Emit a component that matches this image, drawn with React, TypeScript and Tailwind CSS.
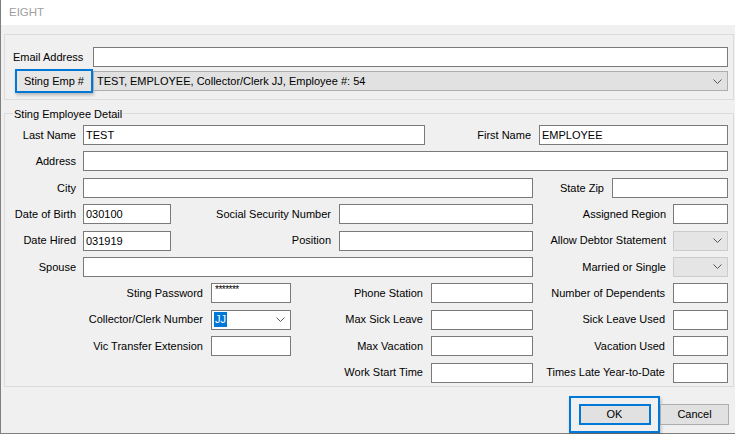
const font = { fontFamily: '"Liberation Sans", Arial, sans-serif' };

function Chevron() {
  return (
    <svg width="9" height="5" viewBox="0 0 9 5" className="shrink-0">
      <polyline points="0.5,0.5 4.5,4.5 8.5,0.5" fill="none" stroke="#555" strokeWidth="1" />
    </svg>
  );
}

function Lbl({ w, children }: { w: string; children: React.ReactNode }) {
  return <div className={`${w} shrink-0 text-right whitespace-nowrap`}>{children}</div>;
}

function Box({ w, ml, value }: { w: string; ml: string; value?: string }) {
  return (
    <div className={`${w} ${ml} h-[20px] shrink-0 border border-[#7a7a7a] bg-white pl-[2px] leading-[18px]`}>
      {value}
    </div>
  );
}

function Drop({ w, ml }: { w: string; ml: string }) {
  return (
    <div className={`${w} ${ml} h-[20px] shrink-0 border border-[#cccccc] bg-[#e5e5e5] flex items-center justify-end pr-[5px]`}>
      <Chevron />
    </div>
  );
}

export default function App() {
  return (
    <div className="w-[735px] h-[434px] bg-[#f0f0f0] border-l border-b border-[#7f7f7f] text-[11px] text-black flex flex-col" style={font}>
      <div className="h-[25px] bg-white flex items-center pl-[8px] text-[11.5px] text-[#a0a0a0] shrink-0">EIGHT</div>

      {/* top group */}
      <div className="mt-[9px] ml-[3px] w-[730px] h-[66px] border border-[#dcdcdc] flex flex-col">
        <div className="flex items-center mt-[12px]">
          <div className="w-[88px] pl-[8px] whitespace-nowrap">Email Address</div>
          <Box w="w-[635px]" ml="ml-0" />
        </div>
        <div className="flex items-center mt-[2px]">
          <div className="ml-[10px] w-[78px] h-[24px] border-2 border-[#0078d7] shadow-[1px_2px_3px_rgba(0,0,0,0.25)] flex items-center justify-center bg-[#e6e6e6]">
            Sting Emp #
          </div>
          <div className="w-[635px] h-[20px] border border-[#adadad] bg-[#e1e1e1] flex items-center pl-[3px] pr-[5px]">
            <span className="flex-1">TEST, EMPLOYEE, Collector/Clerk JJ, Employee #: 54</span>
            <Chevron />
          </div>
        </div>
      </div>

      {/* detail group */}
      <div className="relative mt-[13px] ml-[3px] w-[730px] h-[274px] border border-[#dcdcdc] flex flex-col gap-[6.4px] pt-[11px]">
        <div className="absolute left-[8px] top-[-8px] bg-[#f0f0f0] px-[1px]">Sting Employee Detail</div>

        <div className="flex items-center">
          <Lbl w="w-[71px]">Last Name</Lbl>
          <Box w="w-[342px]" ml="ml-[7px]" value="TEST" />
          <Lbl w="w-[106px]">First Name</Lbl>
          <Box w="w-[189px]" ml="ml-[8px]" value="EMPLOYEE" />
        </div>
        <div className="flex items-center">
          <Lbl w="w-[71px]">Address</Lbl>
          <Box w="w-[645px]" ml="ml-[7px]" />
        </div>
        <div className="flex items-center">
          <Lbl w="w-[71px]">City</Lbl>
          <Box w="w-[450px]" ml="ml-[7px]" />
          <Lbl w="w-[71px]">State Zip</Lbl>
          <Box w="w-[116px]" ml="ml-[8px]" />
        </div>
        <div className="flex items-center">
          <Lbl w="w-[71px]">Date of Birth</Lbl>
          <Box w="w-[88px]" ml="ml-[7px]" value="030100" />
          <Lbl w="w-[160px]">Social Security Number</Lbl>
          <Box w="w-[194px]" ml="ml-[8px]" />
          <Lbl w="w-[133px]">Assigned Region</Lbl>
          <Box w="w-[55px]" ml="ml-[7px]" />
        </div>
        <div className="flex items-center">
          <Lbl w="w-[71px]">Date Hired</Lbl>
          <Box w="w-[88px]" ml="ml-[7px]" value="031919" />
          <Lbl w="w-[160px]">Position</Lbl>
          <Box w="w-[194px]" ml="ml-[8px]" />
          <Lbl w="w-[133px]">Allow Debtor Statement</Lbl>
          <Drop w="w-[55px]" ml="ml-[7px]" />
        </div>
        <div className="flex items-center">
          <Lbl w="w-[71px]">Spouse</Lbl>
          <Box w="w-[450px]" ml="ml-[7px]" />
          <Lbl w="w-[133px]">Married or Single</Lbl>
          <Drop w="w-[55px]" ml="ml-[7px]" />
        </div>
        <div className="flex items-center">
          <Lbl w="w-[198px]">Sting Password</Lbl>
          <div className="w-[80px] ml-[8px] h-[20px] shrink-0 border border-[#7a7a7a] bg-white pl-[3px] leading-[12px] text-[10px] tracking-[-0.5px]">*******</div>
          <Lbl w="w-[132px]">Phone Station</Lbl>
          <Box w="w-[102px]" ml="ml-[8px]" />
          <Lbl w="w-[132px]">Number of Dependents</Lbl>
          <Box w="w-[55px]" ml="ml-[8px]" />
        </div>
        <div className="flex items-center">
          <Lbl w="w-[198px]">Collector/Clerk Number</Lbl>
          <div className="w-[80px] ml-[8px] h-[20px] shrink-0 border border-[#7a7a7a] bg-white flex items-center pl-[2px] pr-[5px]">
            <span className="bg-[#0078d7] text-white px-[1px] leading-[15px]">JJ</span>
            <span className="flex-1" />
            <Chevron />
          </div>
          <Lbl w="w-[132px]">Max Sick Leave</Lbl>
          <Box w="w-[102px]" ml="ml-[8px]" />
          <Lbl w="w-[132px]">Sick Leave Used</Lbl>
          <Box w="w-[55px]" ml="ml-[8px]" />
        </div>
        <div className="flex items-center">
          <Lbl w="w-[198px]">Vic Transfer Extension</Lbl>
          <Box w="w-[80px]" ml="ml-[8px]" />
          <Lbl w="w-[132px]">Max Vacation</Lbl>
          <Box w="w-[102px]" ml="ml-[8px]" />
          <Lbl w="w-[132px]">Vacation Used</Lbl>
          <Box w="w-[55px]" ml="ml-[8px]" />
        </div>
        <div className="flex items-center">
          <div className="w-[286px] shrink-0" />
          <Lbl w="w-[132px]">Work Start Time</Lbl>
          <Box w="w-[102px]" ml="ml-[8px]" />
          <Lbl w="w-[132px]">Times Late Year-to-Date</Lbl>
          <Box w="w-[55px]" ml="ml-[8px]" />
        </div>
      </div>

      {/* buttons */}
      <div className="flex items-center mt-[9px] ml-[568px]">
        <div className="w-[91px] h-[37px] border-2 border-[#0078d7] shadow-[1px_2px_3px_rgba(0,0,0,0.25)] flex items-center justify-center">
          <div className="w-[72px] h-[21px] border-2 border-[#0078d7] bg-[#e1e1e1] flex items-center justify-center">OK</div>
        </div>
        <div className="w-[69px] h-[21px] border border-[#adadad] bg-[#e1e1e1] flex items-center justify-center">Cancel</div>
      </div>
    </div>
  );
}
